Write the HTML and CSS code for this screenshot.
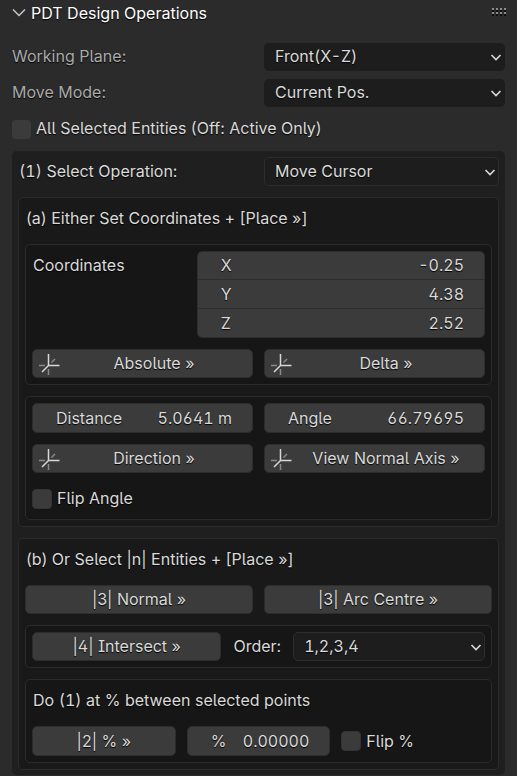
FILE: index.html
```html
<!DOCTYPE html>
<html lang="en">
<head>
<meta charset="utf-8">
<title>PDT Design Operations</title>
<link rel="stylesheet" href="styles.css">
</head>
<body>
<svg class="defs" aria-hidden="true">
  <symbol id="axes" viewBox="0 0 22 22">
    <path class="axis-back" d="M1 12.5h6M10.5 16v6M13.5 9.500l3.500-3.500"/>
    <path class="axis-front" d="M10.500 1v11.500H21.500M10.500 12.500L4 19"/>
  </symbol>
  <symbol id="chevron" viewBox="0 0 12 12">
    <path class="chevron-line" d="M1.500 4l4.500 4.500L10.500 4"/>
  </symbol>
</svg>
<main class="panel">
  <header class="panel-header">
    <button class="collapse" type="button">
      <svg class="collapse-icon" viewBox="0 0 14 10" aria-hidden="true"><path d="M1 1.500l6 6 6-6"/></svg>
      <span>PDT Design Operations</span>
    </button>
    <svg class="grip" viewBox="0 0 15 8" aria-hidden="true">
      <path class="grip-shadow" d="M0 3h15M0 7h15"/>
      <path class="grip-dots" d="M0 1h15M0 5h15"/>
    </svg>
  </header>

  <section class="settings">
    <div class="split">
      <label class="muted" for="plane">Working Plane:</label>
      <div class="dropdown">
        <select id="plane" class="tabular"><option>Front(X-Z)</option></select>
        <svg class="chevron" aria-hidden="true"><use href="#chevron"/></svg>
      </div>
    </div>
    <div class="split">
      <label class="muted" for="mode">Move Mode:</label>
      <div class="dropdown">
        <select id="mode"><option>Current Pos.</option></select>
        <svg class="chevron" aria-hidden="true"><use href="#chevron"/></svg>
      </div>
    </div>
    <label class="check"><input type="checkbox"><span>All Selected Entities (Off: Active Only)</span></label>
  </section>

  <section class="operations">
    <div class="split">
      <label class="caption" for="operation"><span class="tabular">(1)</span> Select Operation:</label>
      <div class="dropdown outlined">
        <select id="operation"><option>Move Cursor</option></select>
        <svg class="chevron" aria-hidden="true"><use href="#chevron"/></svg>
      </div>
    </div>

    <section class="box">
      <h2 class="caption">(a) Either Set Coordinates + [Place »]</h2>
      <div class="box inner">
        <div class="coordinates">
          <span class="caption">Coordinates</span>
          <div class="stack">
            <label class="field"><span>X</span><input type="text" value="-0.25"></label>
            <label class="field"><span>Y</span><input type="text" value="4.38"></label>
            <label class="field"><span>Z</span><input type="text" value="2.52"></label>
          </div>
        </div>
        <div class="split">
          <button class="action" type="button"><svg class="axes" aria-hidden="true"><use href="#axes"/></svg><span>Absolute »</span></button>
          <button class="action" type="button"><svg class="axes" aria-hidden="true"><use href="#axes"/></svg><span>Delta »</span></button>
        </div>
      </div>
      <div class="box inner">
        <div class="split">
          <label class="field"><span>Distance</span><input type="text" value="5.0641 m"></label>
          <label class="field"><span>Angle</span><input type="text" value="66.79695"></label>
        </div>
        <div class="split">
          <button class="action" type="button"><svg class="axes" aria-hidden="true"><use href="#axes"/></svg><span>Direction »</span></button>
          <button class="action" type="button"><svg class="axes" aria-hidden="true"><use href="#axes"/></svg><span>View Normal Axis »</span></button>
        </div>
        <label class="check"><input type="checkbox"><span>Flip Angle</span></label>
      </div>
    </section>

    <section class="box">
      <h2 class="caption">(b) Or Select |n| Entities + [Place »]</h2>
      <div class="split">
        <button class="action" type="button"><span>|3| Normal »</span></button>
        <button class="action" type="button"><span>|3| Arc Centre »</span></button>
      </div>
      <div class="box inner">
        <div class="intersect">
          <button class="action" type="button"><span>|4| Intersect »</span></button>
          <div class="order">
            <label class="caption" for="order">Order:</label>
            <div class="dropdown outlined">
              <select id="order" class="tabular"><option>1,2,3,4</option></select>
              <svg class="chevron" aria-hidden="true"><use href="#chevron"/></svg>
            </div>
          </div>
        </div>
      </div>
      <div class="box inner">
        <h3 class="caption">Do <span class="tabular">(1)</span> at % between selected points</h3>
        <div class="thirds">
          <button class="action" type="button"><span>|2| % »</span></button>
          <label class="field"><span>%</span><input type="text" value="0.00000"></label>
          <label class="check"><input type="checkbox"><span>Flip %</span></label>
        </div>
      </div>
    </section>
  </section>
</main>
</body>
</html>
```
FILE: styles.css
```css
* {
  box-sizing: border-box;
}

body {
  margin: 0;
  min-height: 100vh;
  background: #2b2b2b;
  color: #dadada;
  font: 16px/20px Inter, "Liberation Sans", sans-serif;
  font-feature-settings: "cv02", "cv03", "cv04", "cv05", "cv08";
  text-shadow: 0 1px 1px #000000;
}

button,
input,
select {
  margin: 0;
  padding: 0;
  border: 0;
  background: none;
  color: inherit;
  font: inherit;
  font-feature-settings: inherit;
  text-shadow: inherit;
}

h2,
h3 {
  margin: 0;
  font: inherit;
  font-feature-settings: inherit;
}

.tabular,
.field input {
  font-feature-settings: "tnum", "cv02", "cv03", "cv04", "cv05", "cv08";
}

svg {
  flex: none;
  fill: none;
}

.defs {
  position: absolute;
  width: 0;
  height: 0;
}

.panel {
  padding: 0 12px;
}

.panel-header {
  display: flex;
  align-items: center;
  justify-content: space-between;
  height: 26px;
  margin-right: -2px;
  color: #ffffff;
}

.collapse {
  display: flex;
  align-items: center;
  gap: 5px;
}

.collapse-icon {
  width: 14px;
  height: 10px;
  stroke: #c8c8c8;
  stroke-width: 1.500;
}

.grip {
  width: 15px;
  height: 8px;
  margin-bottom: 2px;
  stroke-width: 2;
  stroke-dasharray: 2 2;
}

.grip-dots {
  stroke: #8c8c8c;
}

.grip-shadow {
  stroke: #0c0c0c;
}

.settings {
  display: grid;
  gap: 8px;
  padding: 17px 0 8px;
}

.split {
  display: grid;
  grid-template-columns: minmax(0, 1fr) minmax(0, 1fr);
  gap: 11px;
  align-items: center;
}

.muted {
  padding-bottom: 2px;
  color: #aaaaaa;
}

.dropdown {
  display: grid;
  align-items: center;
}

.dropdown select {
  grid-area: 1 / 1;
  width: 100%;
  height: 28px;
  padding: 0 28px 2px 11px;
  border-radius: 5px;
  background: #1d1d1d;
  appearance: none;
}

.dropdown.outlined select {
  height: 29px;
  padding-left: 10px;
  border: 1px solid #2d2d2d;
}

.chevron {
  grid-area: 1 / 1;
  justify-self: end;
  width: 12px;
  height: 12px;
  margin-right: 3px;
  pointer-events: none;
}

.chevron-line {
  stroke: #dadada;
  stroke-width: 1.600;
}

.check {
  display: flex;
  align-items: center;
  gap: 5px;
  min-height: 29px;
}

.settings .check {
  min-height: 28px;
}

.check span {
  padding-bottom: 1px;
}

.settings .check span {
  padding-bottom: 2px;
}

.check input {
  width: 20px;
  height: 20px;
  border: 1px solid #333333;
  border-radius: 4px;
  background: #3b3b3b;
  appearance: none;
}

.settings .check input {
  width: 19px;
  height: 19px;
  border: 0;
}

.check input:checked {
  background: #4772b3;
}

.operations {
  display: grid;
  gap: 11px;
  padding: 6px 6px 5px;
  border-radius: 5px;
  background: #1f1f1f;
}

.caption {
  padding-left: 1px;
}

label.caption {
  padding-bottom: 2px;
}

.box {
  display: grid;
  gap: 11px;
  padding: 6px;
  border: 1px solid #2b2b2b;
  border-radius: 5px;
  background: #191919;
}

.box.inner {
  background: #161616;
}

.box > .caption {
  line-height: 29px;
}

.coordinates {
  display: grid;
  grid-template-columns: 4fr 7fr;
}

.coordinates > .caption {
  line-height: 29px;
}

.stack {
  overflow: hidden;
  border: 1px solid #2d2d2d;
  border-radius: 5px;
}

.field {
  display: flex;
  align-items: center;
  height: 30px;
  padding: 0 20px 0 23px;
  border: 1px solid #2d2d2d;
  border-radius: 5px;
  background: #3b3b3b;
}

.stack .field {
  height: 29px;
  border-width: 0 0 1px;
  border-radius: 0;
}

.stack .field:first-child,
.stack .field:last-child {
  height: 28px;
}

.stack .field:first-child {
  padding-bottom: 1px;
}

.stack .field:last-child {
  border: 0;
}

.field input {
  flex: 1;
  min-width: 0;
  text-align: right;
}

.action {
  display: flex;
  align-items: center;
  height: 29px;
  padding: 0 4px;
  border: 1px solid #2d2d2d;
  border-radius: 5px;
  background: #3b3b3b;
}

.action span {
  flex: 1;
  padding-bottom: 1px;
  text-align: center;
}

.axes {
  width: 22px;
  height: 22px;
  margin-left: 1px;
}

.axis-front {
  stroke: #d8d8d8;
  stroke-width: 1.500;
}

.axis-back {
  stroke: #8a8a8a;
  stroke-width: 1.500;
}

.intersect {
  display: grid;
  grid-template-columns: 3fr 4fr;
  gap: 11px;
}

.order {
  display: flex;
  align-items: center;
  gap: 12px;
}

.order .dropdown {
  flex: 1;
}

.thirds {
  display: grid;
  grid-template-columns: repeat(3, minmax(0, 1fr));
  gap: 11px;
  align-items: center;
}

.thirds .action {
  height: 30px;
}
```
